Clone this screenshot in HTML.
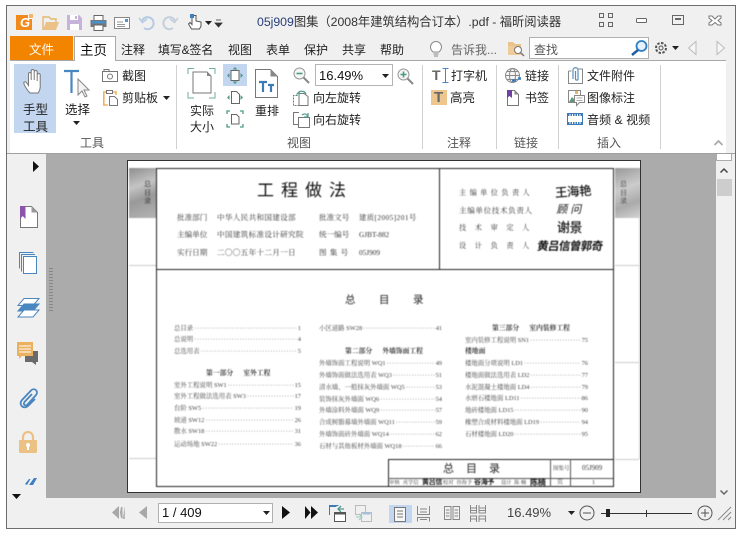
<!DOCTYPE html>
<html lang="zh"><head><meta charset="utf-8"><title>福昕阅读器</title>
<style>
html,body{margin:0;padding:0;background:#fff}
body{width:740px;height:534px;position:relative;overflow:hidden;font-family:"Liberation Sans","Noto Sans CJK SC",sans-serif;color:#222}
.a{position:absolute}
.t{position:absolute;white-space:nowrap;line-height:16px;font-size:12px;color:#222}
.g{color:#555}
.sep{position:absolute;width:1px;top:65px;height:84px;background:#d0d0d0}
svg{position:absolute;overflow:visible}
#doc{position:absolute;left:127px;top:160px;width:514px;height:333px;background:#fff;border:1px solid #333;box-sizing:border-box;overflow:hidden}
#pg{position:absolute;left:-127px;top:-160px;width:740px;height:534px;font-family:"Liberation Serif","Noto Serif CJK SC",serif;color:#444;filter:blur(.4px)}
#pg .p{position:absolute;white-space:nowrap;line-height:10px;font-size:7.6px;color:#333}
#pg .r{position:absolute;display:flex;height:10px;line-height:10px;font-size:6.4px;color:#444;white-space:nowrap}
#pg .r i{flex:1;overflow:hidden;font-style:normal;margin:0 1px;letter-spacing:.55px;color:#555}
#pg .h{position:absolute;white-space:nowrap;line-height:10px;font-size:6.8px;color:#111;font-weight:600}
#pg .h b{font-weight:600;margin-left:10px}
.sg{position:absolute;white-space:nowrap;font-family:"Liberation Sans","Noto Sans CJK SC",sans-serif;font-weight:700;color:#111;line-height:16px}
.ln{position:absolute;background:#222}
.lt{position:absolute;background:#ccc}
</style></head><body>

<!-- window -->
<div class="a" style="left:6px;top:5px;width:730px;height:524px;box-sizing:border-box;border:1px solid #6d6d6d;background:#f0f0f0"></div>
<!-- ribbon -->
<div class="a" style="left:10px;top:60px;width:716px;height:93px;background:#fff;border-top:1px solid #a8a8a8;box-sizing:border-box"></div>
<div class="a" style="left:7px;top:153px;width:728px;height:1px;background:#a0a0a0"></div>

<!-- QAT -->
<div class="a" style="left:16px;top:15px;width:16px;height:15px;background:#f08a1c"></div>
<div class="a" style="left:28px;top:14px;width:5px;height:5px;background:#fff"></div>
<div class="a" style="left:29px;top:14px;width:4px;height:4px;background:#f5b36c"></div>
<div class="a" style="left:20px;top:15px;width:10px;height:14px;color:#fff;font:italic bold 13px/15px 'Liberation Sans',sans-serif">G</div>
<svg style="left:42px;top:15px" width="17" height="16"><path d="M1 15V2h6l2 2h5v3" fill="none" stroke="#e4b872" stroke-width="1.4"/><path d="M1 15l3-8h13l-3 8z" fill="#ecc187"/></svg>
<svg style="left:67px;top:15px" width="15" height="15"><path d="M0 0h12l3 3v12H0z" fill="#c7b3d9"/><rect x="3" y="0" width="8" height="5" fill="#fff"/><rect x="3" y="9" width="9" height="6" fill="#fff"/><rect x="8" y="1" width="2" height="3" fill="#c7b3d9"/></svg>
<svg style="left:90px;top:15px" width="17" height="16"><rect x="4" y="0.5" width="9" height="5" fill="#fff" stroke="#666"/><rect x="0.5" y="5" width="16" height="7" fill="#777"/><rect x="2" y="6" width="13" height="2.5" fill="#4a90c8"/><rect x="4" y="10" width="9" height="5.5" fill="#fff" stroke="#666"/></svg>
<svg style="left:114px;top:17px" width="16" height="12"><rect x=".5" y=".5" width="15" height="11" fill="#fff" stroke="#888"/><path d="M3 5h6M3 7.5h8M3 9.5h8" stroke="#999"/><rect x="11" y="2" width="3" height="3" fill="#5a93c9"/></svg>
<svg style="left:139px;top:15px" width="16" height="15" fill="none" stroke="#b6cbe2" stroke-width="2"><path d="M3 6a6 6 0 1 1 2 7"/><path d="M0 3l3.5 4.5L8 4" stroke-width="1.6"/></svg>
<svg style="left:162px;top:15px" width="16" height="15" fill="none" stroke="#c4cfdc" stroke-width="2"><path d="M13 6a6 6 0 1 0-2 7"/><path d="M16 3l-3.500 4.500L8 4" stroke-width="1.6"/></svg>
<svg style="left:187px;top:14px" width="16" height="17"><path d="M5 1.500v9l-2-2-1.500 1.500 3 5h8l1.500-3v-4l-5-1V1.500z" fill="#fff" stroke="#555"/><rect x="3" y="0" width="4" height="4" fill="#3d7fc0"/></svg>
<svg style="left:205px;top:21px" width="7" height="4"><path d="M0 0h7L3.500 4z" fill="#222"/></svg>
<svg style="left:215px;top:20px" width="7" height="7"><path d="M1 0h5M0 3h7L3.500 7z" stroke="#333" fill="#333" stroke-width=".8"/></svg>
<div class="t" style="left:257px;top:14px;font-size:12.3px;color:#333;letter-spacing:-.02px"><span style="color:#2a3f7a">05j909</span>图集（2008年建筑结构合订本）.pdf - 福昕阅读器</div>

<!-- window controls -->
<svg style="left:599px;top:13px" width="14" height="14" fill="none" stroke="#666"><rect x=".5" y=".5" width="4" height="4"/><rect x="9.500" y=".5" width="4" height="4"/><rect x=".5" y="9.500" width="4" height="4"/><rect x="9.500" y="9.500" width="4" height="4"/></svg>
<svg style="left:636px;top:17px" width="12" height="7"><rect x=".5" y="1.500" width="10" height="4" rx="1" fill="#fff" stroke="#666"/></svg>
<svg style="left:672px;top:15px" width="12" height="10"><rect x=".5" y=".5" width="11" height="9" fill="none" stroke="#666"/><rect x="3" y="3" width="6" height="2" fill="#666"/></svg>
<svg style="left:708px;top:15px" width="14" height="11"><path d="M1 1h3l3 3 3-3h3v2l-3 2.500 3 2.500v2h-3L7 7.500 4 10H1V8l3-2.500L1 3z" fill="#fff" stroke="#777"/></svg>

<!-- tabs -->
<div class="a" style="left:10px;top:36px;width:63px;height:24px;background:#f38400"></div>
<div class="t" style="left:29px;top:42px;color:#fff;font-size:12.5px">文件</div>
<div class="a" style="left:74px;top:36px;width:42px;height:25px;box-sizing:border-box;background:#fff;border:1px solid #a8a8a8;border-bottom:0"></div>
<div class="t" style="left:80px;top:43px;font-size:13.500px;color:#111">主页</div>
<div class="t" style="left:121px;top:42px">注释</div>
<div class="t" style="left:158px;top:42px;letter-spacing:-.2px">填写&amp;签名</div>
<div class="t" style="left:228px;top:42px">视图</div>
<div class="t" style="left:266px;top:42px">表单</div>
<div class="t" style="left:304px;top:42px">保护</div>
<div class="t" style="left:342px;top:42px">共享</div>
<div class="t" style="left:380px;top:42px">帮助</div>
<svg style="left:430px;top:41px" width="12" height="17" fill="none" stroke="#888"><path d="M3 11C1 9 .5 8 .5 6a5.500 5.500 0 0 1 11 0c0 2-.5 3-2.500 5z" fill="#fff"/><path d="M3.500 13h5M4 15h4"/></svg>
<div class="t g" style="left:451px;top:42px;color:#666">告诉我...</div>
<svg style="left:508px;top:41px" width="17" height="15"><path d="M0 14V1h5l2 2h6v3H0z" fill="#e8c48c"/><rect x="0" y="5" width="13" height="9" fill="#eecb98"/><circle cx="10" cy="9" r="3.500" fill="#fff" stroke="#777"/><path d="M12.500 11.500L16 15" stroke="#777" stroke-width="1.500"/></svg>
<div class="a" style="left:529px;top:37px;width:120px;height:22px;box-sizing:border-box;background:#fff;border:1px solid #b0b0b0"></div>
<div class="t" style="left:534px;top:42px;color:#555">查找</div>
<svg style="left:631px;top:40px" width="17" height="16" fill="none"><circle cx="10.500" cy="6" r="5" stroke="#2f7fc4" stroke-width="1.800" fill="#e8f2fb"/><path d="M7 10l-6 5" stroke="#1f5f9e" stroke-width="2.500"/></svg>
<svg style="left:654px;top:41px" width="14" height="14" fill="none" stroke="#555"><circle cx="7" cy="7" r="2"/><circle cx="7" cy="7" r="5" stroke-dasharray="2.500 1.400" stroke-width="2"/></svg>
<svg style="left:672px;top:46px" width="7" height="4"><path d="M0 0h7L3.500 4z" fill="#222"/></svg>
<svg style="left:688px;top:41px" width="9" height="14"><path d="M8 .5v13L.5 7z" fill="#f6f6f6" stroke="#bbb"/></svg>
<svg style="left:716px;top:41px" width="9" height="14"><path d="M1 .5v13L8.500 7z" fill="#f6f6f6" stroke="#bbb"/></svg>

<!-- Ribbon: tools -->
<div class="a" style="left:14px;top:64px;width:42px;height:69px;background:#c3d6f0"></div>
<svg style="left:23px;top:69px" width="24" height="28"><path d="M7 24C4 21 1 16 0.800 14c0-1.500 2-1.500 3 0l1.700 2.500V5c0-2 2.500-2 2.700 0v6-9c0-2 3-2 3 0v9V3c0-2 3-2 3 0v9-6c0-2 3-2 3 0v12c0 3-1 4-2 6z" fill="#fff" stroke="#777" stroke-width="1"/></svg>
<div class="t" style="left:23px;top:102px;font-size:12.500px">手型</div>
<div class="t" style="left:23px;top:119px;font-size:12.500px">工具</div>
<svg style="left:64px;top:70px" width="26" height="28"><path d="M0 1h15M7.500 1v22" stroke="#4a86c0" stroke-width="2.200" fill="none"/><path d="M14 9v16l4-4 3 6 2-1-3-6h5z" fill="#f4f4f4" stroke="#888"/></svg>
<div class="t" style="left:65px;top:102px;font-size:12.500px">选择</div>
<svg style="left:73px;top:121px" width="7" height="4"><path d="M0 0h7L3.500 4z" fill="#222"/></svg>
<svg style="left:102px;top:69px" width="17" height="13" fill="none" stroke="#777"><rect x=".5" y="2.500" width="15" height="10" fill="#fff"/><rect x="2" y=".5" width="5" height="2"/><circle cx="8" cy="7.500" r="2.500"/></svg>
<div class="t" style="left:122px;top:68px;font-size:12px">截图</div>
<svg style="left:103px;top:90px" width="15" height="16" fill="none"><path d="M4 2H.8v13h4" stroke="#efb15f" stroke-width="1.600"/><path d="M9 2h4v3" stroke="#efb15f" stroke-width="1.600"/><rect x="3.500" y=".5" width="6" height="3" fill="#fff" stroke="#777"/><path d="M6.500 6.500h5l3 3v6h-8z" fill="#fff" stroke="#777"/></svg>
<div class="t" style="left:122px;top:90px">剪贴板</div>
<svg style="left:163px;top:96px" width="7" height="4"><path d="M0 0h7L3.500 4z" fill="#222"/></svg>
<div class="t g" style="left:80px;top:135px;font-size:12px">工具</div>
<div class="sep" style="left:176px"></div>

<!-- view -->
<svg style="left:188px;top:68px" width="28" height="31" fill="none"><path d="M0 6V.5h6M21 .5h6V6M0 24v6h6M21 30h6v-6" stroke="#6fae9f"/><path d="M5 4h14l4 4v17H5z" fill="#fff" stroke="#777"/><path d="M19 4l4 4h-4z" fill="#888"/></svg>
<div class="t" style="left:190px;top:103px">实际</div>
<div class="t" style="left:190px;top:119px">大小</div>
<div class="a" style="left:223px;top:64px;width:24px;height:22px;background:#c3d6f0"></div>
<svg style="left:227px;top:67px" width="16" height="17"><rect x="4" y="3.500" width="8" height="10" fill="#fff" stroke="#666"/><path d="M8 0l2.500 2.500h-5zM8 17l2.500-2.500h-5zM0 8.500L2.500 6v5zM16 8.500L13.500 6v5z" fill="#4d9a8a"/></svg>
<svg style="left:227px;top:90px" width="16" height="15"><path d="M4.500 1.500h5l3 3v9h-8z" fill="#fff" stroke="#666"/><path d="M0 7.500L2.500 5v5zM16 7.500L13.500 5v5z" fill="#4d9a8a"/></svg>
<svg style="left:227px;top:111px" width="16" height="16" fill="none"><path d="M4.500 3.500h5l2.500 2.500v7h-7.500z" fill="#fff" stroke="#666"/><path d="M0 3V0h3M13 0h3v3M0 13v3h3M13 16h3v-3" stroke="#4d9a8a" stroke-width="1.300"/></svg>
<svg style="left:255px;top:69px" width="23" height="29"><path d="M.5.500h15l7 7v21H.5z" fill="#fff" stroke="#777"/><path d="M15.500.500l7 7h-7z" fill="#888"/><path d="M4 13h8M8 13v10M13 16h6M16 16v7" stroke="#3c7ab5" stroke-width="2.200" fill="none"/></svg>
<div class="t" style="left:255px;top:103px">重排</div>
<svg style="left:293px;top:67px" width="17" height="17" fill="none"><circle cx="6.500" cy="6.500" r="5.500" fill="#f5f5f5" stroke="#999"/><path d="M3.500 6.500h6" stroke="#4a9a85" stroke-width="1.600"/><path d="M10.500 10.500L16 16" stroke="#888" stroke-width="2"/></svg>
<div class="a" style="left:315px;top:64px;width:78px;height:22px;box-sizing:border-box;background:#fff;border:1px solid #b4b4b4"></div>
<div class="t" style="left:319px;top:68px;font-size:13px;color:#111">16.49%</div>
<svg style="left:382px;top:74px" width="7" height="4"><path d="M0 0h7L3.500 4z" fill="#222"/></svg>
<svg style="left:397px;top:68px" width="17" height="17" fill="none"><circle cx="6.500" cy="6.500" r="5.500" fill="#f5f5f5" stroke="#999"/><path d="M3.500 6.500h6M6.500 3.500v6" stroke="#4a9a85" stroke-width="1.600"/><path d="M10.500 10.500L16 16" stroke="#888" stroke-width="2"/></svg>
<svg style="left:293px;top:90px" width="17" height="16" fill="none"><path d="M4.500 5.500h-4v10h6" stroke="#777" stroke-dasharray="2 1"/><path d="M6 3.500h5l4 3v9H6z" fill="#fff" stroke="#777"/><path d="M6 7V2L3.500 4.500M6 2c3-1.500 6-.5 7 2" stroke="#4d9a8a" stroke-width="1.200"/></svg>
<div class="t" style="left:313px;top:90px">向左旋转</div>
<svg style="left:293px;top:112px" width="17" height="16" fill="none"><path d="M6 .5H.5v12h5" stroke="#777"/><path d="M5.500 5.500h11v10h-11z" fill="#fff" stroke="#777"/><path d="M9 3c3-2 5-1 6 2M15 1v4h-4" stroke="#4d9a8a" stroke-width="1.200"/></svg>
<div class="t" style="left:313px;top:112px">向右旋转</div>
<div class="t g" style="left:287px;top:135px">视图</div>
<div class="sep" style="left:422px"></div>

<!-- annotate -->
<div class="t" style="left:432px;top:67px;font:bold 14px/17px 'Liberation Sans',sans-serif;color:#666">T</div>
<svg style="left:442px;top:68px" width="7" height="15" fill="none" stroke="#4a86c0"><path d="M.5.500h6M3.500.500v14M.5 14.500h6"/></svg>
<div class="t" style="left:451px;top:68px">打字机</div>
<div class="a" style="left:431px;top:90px;width:16px;height:15px;background:#ecc68c"></div>
<div class="t" style="left:434px;top:89px;font:bold 15px/17px 'Liberation Sans',sans-serif;color:#666">T</div>
<div class="t" style="left:450px;top:90px;font-size:12.500px">高亮</div>
<div class="t g" style="left:447px;top:135px">注释</div>
<div class="sep" style="left:496px"></div>

<!-- link -->
<svg style="left:505px;top:68px" width="17" height="16" fill="none"><circle cx="7.500" cy="7.500" r="7" fill="#f5f5f5" stroke="#888"/><ellipse cx="7.500" cy="7.500" rx="3" ry="7" stroke="#888"/><path d="M.5 7.500h14M2 3.500h11M2 11.500h11" stroke="#888"/><path d="M7 12.500h4M13 10.500h3" stroke="#3c7ab5" stroke-width="2.400"/></svg>
<div class="t" style="left:525px;top:68px">链接</div>
<svg style="left:507px;top:90px" width="12" height="16"><path d="M.5.500h7l4 4v11H.5z" fill="#fff" stroke="#777"/><path d="M7.500.500l4 4h-4z" fill="#888"/><path d="M0 0h5v8L2.500 6 0 8z" fill="#6e42a0"/></svg>
<div class="t" style="left:525px;top:90px">书签</div>
<div class="t g" style="left:514px;top:135px">链接</div>
<div class="sep" style="left:558px"></div>

<!-- insert -->
<svg style="left:568px;top:67px" width="15" height="17" fill="none"><path d="M.5 4h3M10 2h4.500v14.500H.5V4" stroke="#888"/><path d="M5 12V3c0-3 5-3 5 0v9c0 1.500-2.500 1.500-2.500 0V4" stroke="#5a8dc0" stroke-width="1.200"/></svg>
<div class="t" style="left:587px;top:68px">文件附件</div>
<svg style="left:568px;top:90px" width="17" height="16"><rect x=".5" y=".5" width="12" height="12" fill="#fff" stroke="#888"/><path d="M1 12l3-5 3 3 2-2 3 4z" fill="#5a9a7a"/><rect x="7" y="1" width="3" height="3" fill="#ecb56a"/><path d="M6.500 5.500h10v7h-5l-3 3v-3h-2z" fill="#fff" stroke="#888"/><path d="M8.500 8h6M8.500 10.500h6" stroke="#aaa"/></svg>
<div class="t" style="left:587px;top:90px">图像标注</div>
<svg style="left:567px;top:113px" width="16" height="12"><rect x=".5" y=".5" width="15" height="11" fill="#fff" stroke="#3c7ab5"/><path d="M1 2h14M1 10h14" stroke="#3c7ab5" stroke-width="2" stroke-dasharray="1.500 1"/></svg>
<div class="t" style="left:587px;top:112px;letter-spacing:.1px">音频 &amp; 视频</div>
<div class="t g" style="left:597px;top:135px">插入</div>
<div class="sep" style="left:660px"></div>
<svg style="left:714px;top:140px" width="9" height="6" fill="none"><path d="M.5 5L4.500 1l4 4" stroke="#aaa" stroke-width="1.800"/></svg>

<!-- main area -->
<div class="a" style="left:46px;top:154px;width:670px;height:344px;background:#ababab"></div>
<div class="a" style="left:7px;top:154px;width:39px;height:344px;background:#f0f0f0"></div>
<div class="a" style="left:49px;top:267px;width:4px;height:44px;background-image:radial-gradient(#666 35%,transparent 40%);background-size:2px 3px"></div>
<svg style="left:33px;top:161px" width="6" height="11"><path d="M0 0l6 5.500L0 11z" fill="#111"/></svg>
<svg style="left:20px;top:206px" width="18" height="22"><path d="M.5.500h11l6 6v15H.5z" fill="#fff" stroke="#777"/><path d="M11.500.500l6 6h-6z" fill="#999"/><path d="M0 0h5.500v13L2.700 10 0 13z" fill="#8b55ac"/></svg>
<svg style="left:19px;top:252px" width="19" height="22" fill="none" stroke="#4a86c0"><path d="M14.500.5H.5v16"/><path d="M16 2.500H2.500v17"/><rect x="4.500" y="4.500" width="13" height="17" fill="#fff"/></svg>
<svg style="left:17px;top:298px" width="23" height="20" fill="none" stroke="#4a86c0"><path d="M7 .5h15l-6 7H1z" fill="#fff"/><path d="M7 6h15l-6 7H1z" fill="#4a86c0"/><path d="M7 12h15l-6 7H1z" fill="#fff"/></svg>
<svg style="left:17px;top:342px" width="22" height="22"><path d="M8 9h13v11h-2v3l-4-3H8z" fill="#6a6a6a"/><path d="M0 0h16v14H5l-3 3v-3H0z" fill="#ecb15f"/><path d="M2 4h12M2 7h12M2 10h12" stroke="#fff"/></svg>
<svg style="left:19px;top:387px" width="20" height="22" fill="none"><path d="M13 7L5.500 15c-2 2.500 1 4.500 3 2.500L17 8c3-3.500-1.500-8-5-4.500L3 13c-4 4.500 1.500 10 6 6l7-7" stroke="#4a86c0" stroke-width="1.800"/></svg>
<svg style="left:19px;top:431px" width="18" height="22"><path d="M4 10V6a5 5 0 0 1 10 0v4" fill="none" stroke="#ecc184" stroke-width="2.200"/><rect x="0" y="9" width="18" height="13" rx="1" fill="#ecc184"/><circle cx="9" cy="14" r="2" fill="#fff"/><rect x="8" y="15" width="2" height="4" fill="#fff"/></svg>
<svg style="left:25px;top:478px" width="12" height="8"><path d="M0 6L4 1h1.500L2 7zM4 7l5-7h3L8 7z" fill="#3d7fc0"/></svg>
<svg style="left:12px;top:494px" width="9" height="5"><path d="M0 0h9L4.500 5z" fill="#111"/></svg>

<!-- scrollbar -->
<div class="a" style="left:716px;top:154px;width:19px;height:344px;background:#f0f0f0"></div>
<div class="a" style="left:716px;top:154px;width:16px;height:7px;background:#fff;border:1px solid #aaa;border-top:0;box-sizing:border-box"></div>
<svg style="left:720px;top:168px" width="8" height="5" fill="none"><path d="M.5 4.500L4 1l3.500 3.500" stroke="#444" stroke-width="1.500"/></svg>
<div class="a" style="left:717px;top:179px;width:15px;height:17px;background:#cdcdcd"></div>
<svg style="left:720px;top:490px" width="8" height="5" fill="none"><path d="M.5.500L4 4 7.500.500" stroke="#666" stroke-width="1.500"/></svg>

<!-- document -->
<div id="doc"><div id="pg">
  <div class="a" style="left:128px;top:167px;width:27px;height:50px;background:linear-gradient(160deg,#8d8d8d,#c4c4c4 35%,#999 60%,#b4b4b4)"></div>
  <div class="a" style="left:614px;top:167px;width:26px;height:50px;background:linear-gradient(160deg,#999,#ccc 40%,#aaa 70%,#d4d4d4)"></div>
  <div class="p" style="left:143px;top:179px;font-size:7px;line-height:8.500px;width:8px;white-space:normal;color:#222">总目录</div>
  <div class="p" style="left:619px;top:179px;font-size:7px;line-height:8.500px;width:8px;white-space:normal;color:#333">总目录</div>
  <div class="lt" style="left:128px;top:264px;width:27px;height:1px"></div>
  <div class="lt" style="left:128px;top:457px;width:27px;height:1px"></div>
  <div class="lt" style="left:614px;top:264px;width:24px;height:1px"></div>
  <div class="lt" style="left:614px;top:361px;width:24px;height:1px"></div>
  <div class="lt" style="left:614px;top:458px;width:24px;height:1px"></div>
  <div class="lt" style="left:638px;top:217px;width:1px;height:241px"></div>

  <div class="ln" style="left:156px;top:167px;width:457px;height:1px"></div>
  <div class="ln" style="left:155px;top:167px;width:1px;height:319px"></div>
  <div class="ln" style="left:612px;top:167px;width:1px;height:319px"></div>
  <div class="ln" style="left:156px;top:268px;width:457px;height:1px"></div>
  <div class="ln" style="left:438px;top:167px;width:1px;height:101px"></div>
  <div class="ln" style="left:155px;top:485px;width:458px;height:1px"></div>

  <div class="p" style="left:256px;top:180px;font-size:17px;line-height:20px;letter-spacing:7px;color:#111;font-family:'Liberation Sans','Noto Sans CJK SC',sans-serif">工程做法</div>
  <div class="p" style="left:176px;top:212px">批准部门</div><div class="p" style="left:216px;top:212px;letter-spacing:.3px">中华人民共和国建设部</div>
  <div class="p" style="left:318px;top:212px">批准文号</div><div class="p" style="left:358px;top:212px;font-size:7.300px;letter-spacing:.45px">建质[2005]201号</div>
  <div class="p" style="left:176px;top:229px">主编单位</div><div class="p" style="left:216px;top:229px;letter-spacing:.3px">中国建筑标准设计研究院</div>
  <div class="p" style="left:318px;top:229px">统一编号</div><div class="p" style="left:358px;top:229px;font-size:7.300px">GJBT-882</div>
  <div class="p" style="left:176px;top:247px">实行日期</div><div class="p" style="left:216px;top:247px;letter-spacing:.3px">二〇〇五年十二月一日</div>
  <div class="p" style="left:318px;top:247px;letter-spacing:3.200px">图集号</div><div class="p" style="left:358px;top:247px;font-size:7.300px">05J909</div>

  <div class="p" style="left:458px;top:187px;letter-spacing:3.400px;font-size:7.200px">主编单位负责人</div>
  <div class="p" style="left:458px;top:205px;font-size:7.600px;letter-spacing:.6px">主编单位技术负责人</div>
  <div class="p" style="left:458px;top:222px;letter-spacing:8.600px;font-size:7.200px">技术审定人</div>
  <div class="p" style="left:458px;top:240px;letter-spacing:8.600px;font-size:7.200px">设计负责人</div>
  <div class="sg" style="left:554px;top:183px;font-size:12.500px;letter-spacing:-.5px;font-weight:500;transform:rotate(-4deg)">王海艳</div>
  <div class="sg" style="left:556px;top:201px;font-size:11px;font-weight:400;letter-spacing:3px;transform:skewX(-12deg)">顾问</div>
  <div class="sg" style="left:556px;top:219px;font-size:13px;font-weight:500;letter-spacing:-.5px">谢景</div>
  <div class="sg" style="left:536px;top:238px;font-size:11.500px;letter-spacing:-.6px;font-weight:700;transform:skewX(-8deg)">黄吕信曾郭奇</div>

  <div class="p" style="left:344px;top:294px;font-size:10.500px;letter-spacing:23.500px;color:#222;font-family:'Liberation Sans','Noto Sans CJK SC',sans-serif">总目录</div>

  <!-- col 1 -->
  <div class="r" style="left:173px;top:323px;width:127px"><span>总目录</span><i>································································</i><span>1</span></div>
  <div class="r" style="left:173px;top:334px;width:127px"><span>总说明</span><i>································································</i><span>4</span></div>
  <div class="r" style="left:173px;top:346px;width:127px"><span>总选用表</span><i>································································</i><span>5</span></div>
  <div class="h" style="left:205px;top:368px">第一部分<b>室外工程</b></div>
  <div class="r" style="left:173px;top:380px;width:127px"><span>室外工程说明 SW1</span><i>································································</i><span>15</span></div>
  <div class="r" style="left:173px;top:391px;width:127px"><span>室外工程做法选用表 SW3</span><i>································································</i><span>17</span></div>
  <div class="r" style="left:173px;top:403px;width:127px"><span>台阶 SW5</span><i>································································</i><span>19</span></div>
  <div class="r" style="left:173px;top:415px;width:127px"><span>坡道 SW12</span><i>································································</i><span>26</span></div>
  <div class="r" style="left:173px;top:426px;width:127px"><span>散水 SW18</span><i>································································</i><span>31</span></div>
  <div class="r" style="left:173px;top:439px;width:127px"><span>运动场地 SW22</span><i>································································</i><span>36</span></div>
  <!-- col 2 -->
  <div class="r" style="left:318px;top:323px;width:123px"><span>小区道路 SW28</span><i>································································</i><span>41</span></div>
  <div class="h" style="left:344px;top:346px">第二部分<b>外墙饰面工程</b></div>
  <div class="r" style="left:318px;top:358px;width:123px"><span>外墙饰面工程说明 WQ1</span><i>································································</i><span>49</span></div>
  <div class="r" style="left:318px;top:370px;width:123px"><span>外墙饰面做法选用表 WQ3</span><i>································································</i><span>51</span></div>
  <div class="r" style="left:318px;top:382px;width:123px"><span>清水墙、一般抹灰外墙面 WQ5</span><i>································································</i><span>53</span></div>
  <div class="r" style="left:318px;top:394px;width:123px"><span>装饰抹灰外墙面 WQ6</span><i>································································</i><span>54</span></div>
  <div class="r" style="left:318px;top:405px;width:123px"><span>外墙涂料外墙面 WQ9</span><i>································································</i><span>57</span></div>
  <div class="r" style="left:318px;top:417px;width:123px"><span>合成树脂幕墙外墙面 WQ11</span><i>································································</i><span>59</span></div>
  <div class="r" style="left:318px;top:429px;width:123px"><span>外墙饰面砖外墙面 WQ14</span><i>································································</i><span>62</span></div>
  <div class="r" style="left:318px;top:441px;width:123px"><span>石材与其他板材外墙面 WQ18</span><i>································································</i><span>66</span></div>
  <!-- col 3 -->
  <div class="h" style="left:491px;top:323px">第三部分<b>室内装修工程</b></div>
  <div class="r" style="left:464px;top:335px;width:123px"><span>室内装修工程说明 SN1</span><i>································································</i><span>75</span></div>
  <div class="h" style="left:464px;top:346px">楼地面</div>
  <div class="r" style="left:464px;top:358px;width:123px"><span>楼地面分项说明 LD1</span><i>································································</i><span>76</span></div>
  <div class="r" style="left:464px;top:370px;width:123px"><span>楼地面做法选用表 LD2</span><i>································································</i><span>77</span></div>
  <div class="r" style="left:464px;top:382px;width:123px"><span>水泥混凝土楼地面 LD4</span><i>································································</i><span>79</span></div>
  <div class="r" style="left:464px;top:393px;width:123px"><span>水磨石楼地面 LD11</span><i>································································</i><span>86</span></div>
  <div class="r" style="left:464px;top:405px;width:123px"><span>地砖楼地面 LD15</span><i>································································</i><span>90</span></div>
  <div class="r" style="left:464px;top:417px;width:123px"><span>橡塑合成材料楼地面 LD19</span><i>································································</i><span>94</span></div>
  <div class="r" style="left:464px;top:429px;width:123px"><span>石材楼地面 LD20</span><i>································································</i><span>95</span></div>

  <!-- title block -->
  <div class="a" style="left:387px;top:458px;width:226px;height:28px;box-sizing:border-box;border:1px solid #222;background:#fff"></div>
  <div class="ln" style="left:387px;top:477px;width:225px;height:1px;background:#555"></div>
  <div class="ln" style="left:549px;top:458px;width:1px;height:28px;background:#555"></div>
  <div class="ln" style="left:569px;top:458px;width:1px;height:28px;background:#555"></div>
  <div class="p" style="left:442px;top:461px;font-size:11px;line-height:14px;letter-spacing:12px;color:#222;font-family:'Liberation Sans','Noto Sans CJK SC',sans-serif">总目录</div>
  <div class="p" style="left:552px;top:463px;font-size:5.500px">图集号</div>
  <div class="p" style="left:581px;top:462px;font-size:7px">05J909</div>
  <div class="p" style="left:556px;top:477px;font-size:6px">页</div>
  <div class="p" style="left:591px;top:477px;font-size:6px">1</div>
  <div class="p" style="left:388px;top:477px;font-size:5.300px;letter-spacing:.1px">审核 &nbsp;戎学信</div>
  <div class="sg" style="left:421px;top:474px;font-size:7px;letter-spacing:-.3px">黄吕信</div>
  <div class="p" style="left:442px;top:477px;font-size:5.300px">校对 &nbsp;谷海予</div>
  <div class="sg" style="left:473px;top:474px;font-size:7px;letter-spacing:-.3px">谷海予</div>
  <div class="p" style="left:500px;top:477px;font-size:5.300px">设计 &nbsp;陈 楠</div>
  <div class="sg" style="left:529px;top:474px;font-size:8px;letter-spacing:-.3px">陈楠</div>
</div></div>

<!-- status bar -->
<svg style="left:112px;top:506px" width="13" height="13"><path d="M7 0v13L0 6.500zM9 1h1.500v11H9l-1-5.500z" fill="#a8a8a8"/><path d="M13 0v13H10.500z" fill="#b8b8b8"/></svg>
<svg style="left:139px;top:506px" width="8" height="13"><path d="M8 0v13L0 6.500z" fill="#a8a8a8"/></svg>
<div class="a" style="left:158px;top:503px;width:115px;height:20px;box-sizing:border-box;background:#fff;border:1px solid #b0b0b0"></div>
<div class="t" style="left:162px;top:505px;font-size:13px;color:#111">1 / 409</div>
<svg style="left:263px;top:511px" width="7" height="4"><path d="M0 0h7L3.500 4z" fill="#222"/></svg>
<svg style="left:282px;top:506px" width="8" height="13"><path d="M0 0l8 6.500L0 13z" fill="#111"/></svg>
<svg style="left:305px;top:506px" width="13" height="13"><path d="M0 0l5.500 6.500L0 13zM6 0l7 6.500L6 13z" fill="#111"/></svg>
<svg style="left:329px;top:505px" width="17" height="17" fill="none"><path d="M.5 10V.5h9" stroke="#3c7ab5"/><path d="M.5 1h7" stroke="#3c7ab5" stroke-width="2"/><rect x="5.500" y="7.500" width="11" height="9" fill="#fff" stroke="#555"/><path d="M5.500 8.500h11" stroke="#555" stroke-width="2"/><path d="M15 4H9M12 1L9 4l3 3" stroke="#4d9a8a" stroke-width="1.300"/></svg>
<svg style="left:355px;top:505px" width="17" height="17" fill="none"><rect x=".5" y=".5" width="10" height="9" stroke="#bbb"/><rect x="6.500" y="7.500" width="10" height="9" stroke="#bbb" fill="#f0f0f0"/><path d="M7.500 8.500h8" stroke="#9cc0de" stroke-width="2"/><path d="M1 12h6M4 9l3 3-3 3" stroke="#a9d0c6" stroke-width="1.300"/></svg>
<div class="a" style="left:389px;top:505px;width:23px;height:18px;background:#c3d6f0"></div>
<svg style="left:394px;top:507px" width="12" height="15" fill="none" stroke="#777"><rect x=".5" y=".5" width="11" height="14" fill="#f6f6f6"/><path d="M3 4h6M3 7h6M3 10h6"/></svg>
<svg style="left:417px;top:506px" width="13" height="16" fill="none" stroke="#888"><path d="M.5 0v8.500h12V0M3 3h7M3 6h7M.5 15.500v-4h12v4M3 13.500h7"/></svg>
<svg style="left:444px;top:506px" width="16" height="14" fill="none" stroke="#888"><rect x=".5" y=".5" width="6.500" height="13"/><rect x="9" y=".5" width="6.500" height="13"/><path d="M2 4h3.500M2 7h3.500M2 10h3.500M10.500 4H14M10.500 7H14M10.500 10H14"/></svg>
<svg style="left:470px;top:505px" width="16" height="17" fill="none" stroke="#888"><path d="M.5 0v8h6V0M9 0v8h6.500V0M.5 3h6M.5 5.500h6M9 3h6.500M9 5.500h6.500M.5 17v-6h6v6M9 17v-6h6.500v6M.5 14h6M9 14h6.500"/></svg>
<div class="t" style="left:507px;top:505px;font-size:13px;color:#444">16.49%</div>
<svg style="left:568px;top:511px" width="7" height="4"><path d="M0 0h7L3.500 4z" fill="#222"/></svg>
<svg style="left:579px;top:505px" width="16" height="16" fill="none" stroke="#555"><circle cx="8" cy="8" r="7"/><path d="M4 8h8"/></svg>
<div class="a" style="left:601px;top:513px;width:91px;height:1px;background:#333"></div>
<div class="a" style="left:646px;top:510px;width:1px;height:7px;background:#333"></div>
<div class="a" style="left:606px;top:509px;width:4px;height:8px;background:#222"></div>
<svg style="left:697px;top:505px" width="16" height="16" fill="none" stroke="#555"><circle cx="8" cy="8" r="7"/><path d="M4 8h8M8 4v8"/></svg>
<svg style="left:718px;top:506px" width="14" height="14" fill="none" stroke="#888"><path d="M0 14L13 1M5 14l8-8M10 14l3-3"/></svg>
</body></html>
